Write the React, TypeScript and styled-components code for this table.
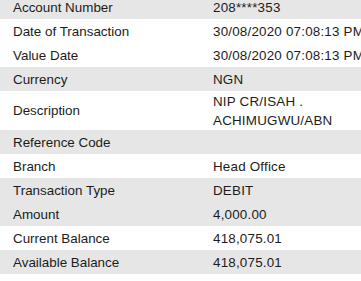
import { createGlobalStyle, styled } from "styled-components";

const GlobalStyle = createGlobalStyle`
  html, body {
    margin: 0;
    padding: 0;
    background: #ffffff;
    overflow: hidden;
  }
  body {
    font-family: "Liberation Sans", Arial, sans-serif;
  }
`;

type Detail = {
  label: string;
  value: string;
  shaded?: boolean;
  tall?: boolean;
};

const details: Detail[] = [
  { label: "Account Number", value: "208****353", shaded: true },
  { label: "Date of Transaction", value: "30/08/2020 07:08:13 PM" },
  { label: "Value Date", value: "30/08/2020 07:08:13 PM" },
  { label: "Currency", value: "NGN", shaded: true },
  { label: "Description", value: "NIP CR/ISAH . ACHIMUGWU/ABN", tall: true },
  { label: "Reference Code", value: "", shaded: true },
  { label: "Branch", value: "Head Office" },
  { label: "Transaction Type", value: "DEBIT", shaded: true },
  { label: "Amount", value: "4,000.00", shaded: true },
  { label: "Current Balance", value: "418,075.01" },
  { label: "Available Balance", value: "418,075.01", shaded: true },
];

const Table = styled.div`
  display: flex;
  flex-direction: column;
  width: 100%;
  margin-top: -5px;
  color: #1c1c1c;
  font-size: 13.4px;
`;

const Row = styled.div<{ $shaded?: boolean; $tall?: boolean }>`
  display: grid;
  grid-template-columns: 213px 1fr;
  align-items: center;
  height: ${(p) => (p.$tall ? "39px" : "24px")};
  overflow: hidden;
  background: ${(p) => (p.$shaded ? "#e6e6e6" : "#ffffff")};
`;

const Label = styled.div`
  padding-left: 13px;
  white-space: nowrap;
`;

const Value = styled.div`
  width: 160px;
  line-height: 19px;
  letter-spacing: 0.2px;
`;

export default function App() {
  return (
    <>
      <GlobalStyle />
      <Table>
        {details.map((d) => (
          <Row key={d.label} $shaded={d.shaded} $tall={d.tall}>
            <Label>{d.label}</Label>
            <Value>{d.value}</Value>
          </Row>
        ))}
      </Table>
    </>
  );
}
